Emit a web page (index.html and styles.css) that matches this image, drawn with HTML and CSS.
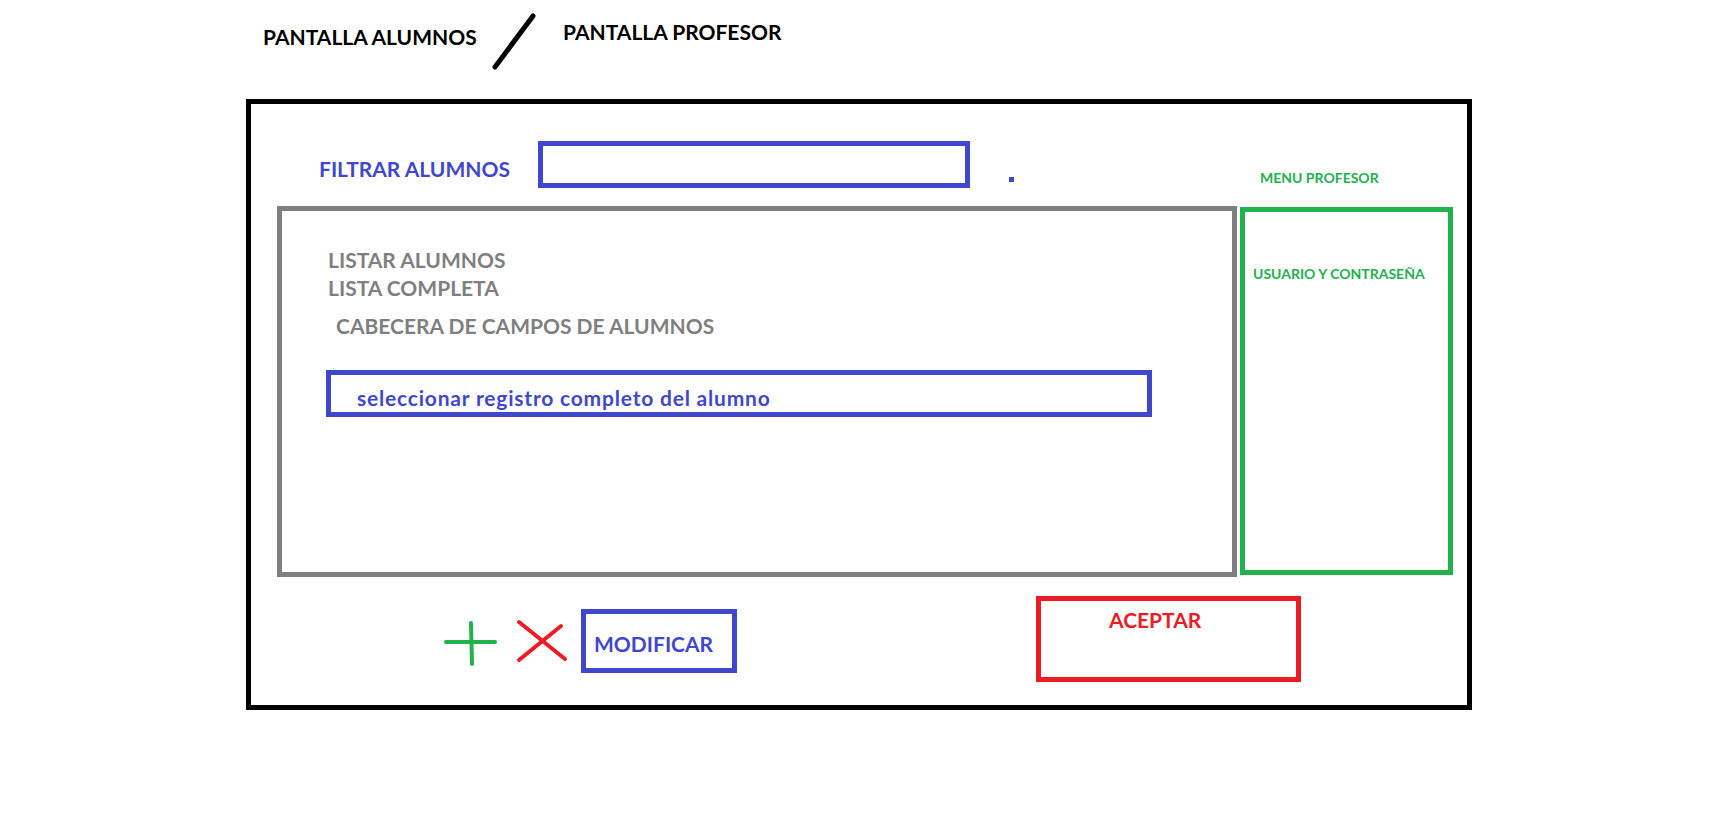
FILE: index.html
```html
<!DOCTYPE html>
<html>
<head>
<meta charset="UTF-8">
<title>Pantalla Alumnos / Pantalla Profesor</title>
<link rel="stylesheet" href="styles.css">
</head>
<body>
<div class="titles">
    <span class="screen-title title-students">PANTALLA ALUMNOS</span>
    <svg class="slash" viewBox="0 0 48 60"><path d="M43 5 L5 56"/></svg>
    <span class="screen-title title-teachers">PANTALLA PROFESOR</span>
</div>

<div class="frame">
    <div class="filter-row">
        <span class="filter-label">FILTRAR ALUMNOS</span>
        <div class="filter-input"></div>
        <span class="dot"></span>
        <span class="menu-label">MENU PROFESOR</span>
    </div>

    <div class="panels">
        <div class="list-panel">
            <p class="list-title">LISTAR ALUMNOS</p>
            <p class="list-title second">LISTA COMPLETA</p>
            <p class="list-header">CABECERA DE CAMPOS DE ALUMNOS</p>
            <div class="record">seleccionar registro completo del alumno</div>
        </div>
        <div class="teacher-panel">
            <p class="login-label">USUARIO Y CONTRASEÑA</p>
        </div>
    </div>

    <div class="actions">
        <svg class="icon-add" viewBox="0 0 56 50"><path d="M4 23 L53 23 M29 4 L30 45"/></svg>
        <svg class="icon-delete" viewBox="0 0 54 46"><path d="M4 3 L50 40 M46 7 L4 41"/></svg>
        <div class="btn-modify">MODIFICAR</div>
        <div class="btn-accept">ACEPTAR</div>
    </div>
</div>
</body>
</html>
```

FILE: styles.css
```css
body {
  margin: 0;
  background: #fff;
  font-family: Lato, "Liberation Sans", sans-serif;
  font-weight: 700;
}

p {
  margin: 0;
}

/* top titles */
.titles {
  display: flex;
  align-items: flex-start;
  height: 99px;
  padding-left: 263px;
}
.screen-title {
  font-size: 21px;
  line-height: 1;
  color: #000;
  white-space: nowrap;
}
.title-students {
  width: 214px;
  margin-top: 26px;
}
.slash {
  width: 48px;
  height: 60px;
  margin-top: 11px;
  margin-left: 13px;
}
.slash path {
  stroke: #000;
  stroke-width: 5;
  stroke-linecap: round;
  fill: none;
}
.title-teachers {
  margin-left: 25px;
  margin-top: 21px;
}

/* main frame */
.frame {
  margin-left: 246px;
  width: 1226px;
  height: 611px;
  box-sizing: border-box;
  border: 5px solid #000;
  padding-top: 37px;
}

.filter-row {
  display: flex;
  align-items: flex-start;
  padding-left: 68px;
}
.filter-label {
  width: 190px;
  margin-top: 17px;
  font-size: 21px;
  line-height: 1;
  color: #3f48cc;
  white-space: nowrap;
}
.filter-input {
  margin-left: 29px;
  width: 432px;
  height: 47px;
  box-sizing: border-box;
  border: 5px solid #3f48cc;
}
.dot {
  margin-left: 39px;
  margin-top: 36px;
  width: 5px;
  height: 5px;
  background: #3f48cc;
}
.menu-label {
  margin-left: 246px;
  margin-top: 30px;
  font-size: 14px;
  line-height: 1;
  color: #22b14c;
  white-space: nowrap;
}

.panels {
  display: flex;
  align-items: flex-start;
  margin-top: 18px;
  padding-left: 26px;
}
.list-panel {
  width: 960px;
  height: 371px;
  box-sizing: border-box;
  border: 5px solid #7f7f7f;
  padding: 38px 0 0 46px;
}
.list-title, .list-header {
  font-size: 21px;
  line-height: 1;
  color: #7f7f7f;
}
.second {
  margin-top: 7px;
}
.list-header {
  margin-top: 17px;
  padding-left: 8px;
}
.record {
  margin-top: 34px;
  margin-left: -2px;
  width: 826px;
  height: 47px;
  box-sizing: border-box;
  border: 5px solid #3f48cc;
  padding: 12px 0 0 26px;
  font-size: 21px;
  letter-spacing: 0.8px;
  line-height: 1;
  color: #3f48cc;
}
.teacher-panel {
  margin-left: 3px;
  margin-top: 1px;
  width: 213px;
  height: 368px;
  box-sizing: border-box;
  border: 5px solid #22b14c;
  padding: 55px 0 0 8px;
}
.login-label {
  font-size: 14px;
  line-height: 1;
  color: #22b14c;
  white-space: nowrap;
}

/* bottom actions */
.actions {
  display: flex;
  align-items: flex-start;
  margin-top: 19px;
  padding-left: 191px;
}
.icon-add, .icon-delete {
  margin-top: 23px;
}
.icon-add {
  width: 56px;
  height: 50px;
}
.icon-add path {
  stroke: #22b14c;
  stroke-width: 4;
  stroke-linecap: round;
  fill: none;
}
.icon-delete {
  width: 54px;
  height: 46px;
  margin-left: 17px;
}
.icon-delete path {
  stroke: #ed1c24;
  stroke-width: 4;
  stroke-linecap: round;
  fill: none;
}
.btn-modify {
  margin-left: 12px;
  margin-top: 13px;
  width: 156px;
  height: 64px;
  box-sizing: border-box;
  border: 5px solid #3f48cc;
  padding: 19px 0 0 8px;
  font-size: 21px;
  line-height: 1;
  color: #3f48cc;
}
.btn-accept {
  margin-left: 299px;
  width: 265px;
  height: 86px;
  box-sizing: border-box;
  border: 5px solid #ed1c24;
  padding: 8px 0 0 68px;
  font-size: 21px;
  line-height: 1;
  color: #ed1c24;
}
```
